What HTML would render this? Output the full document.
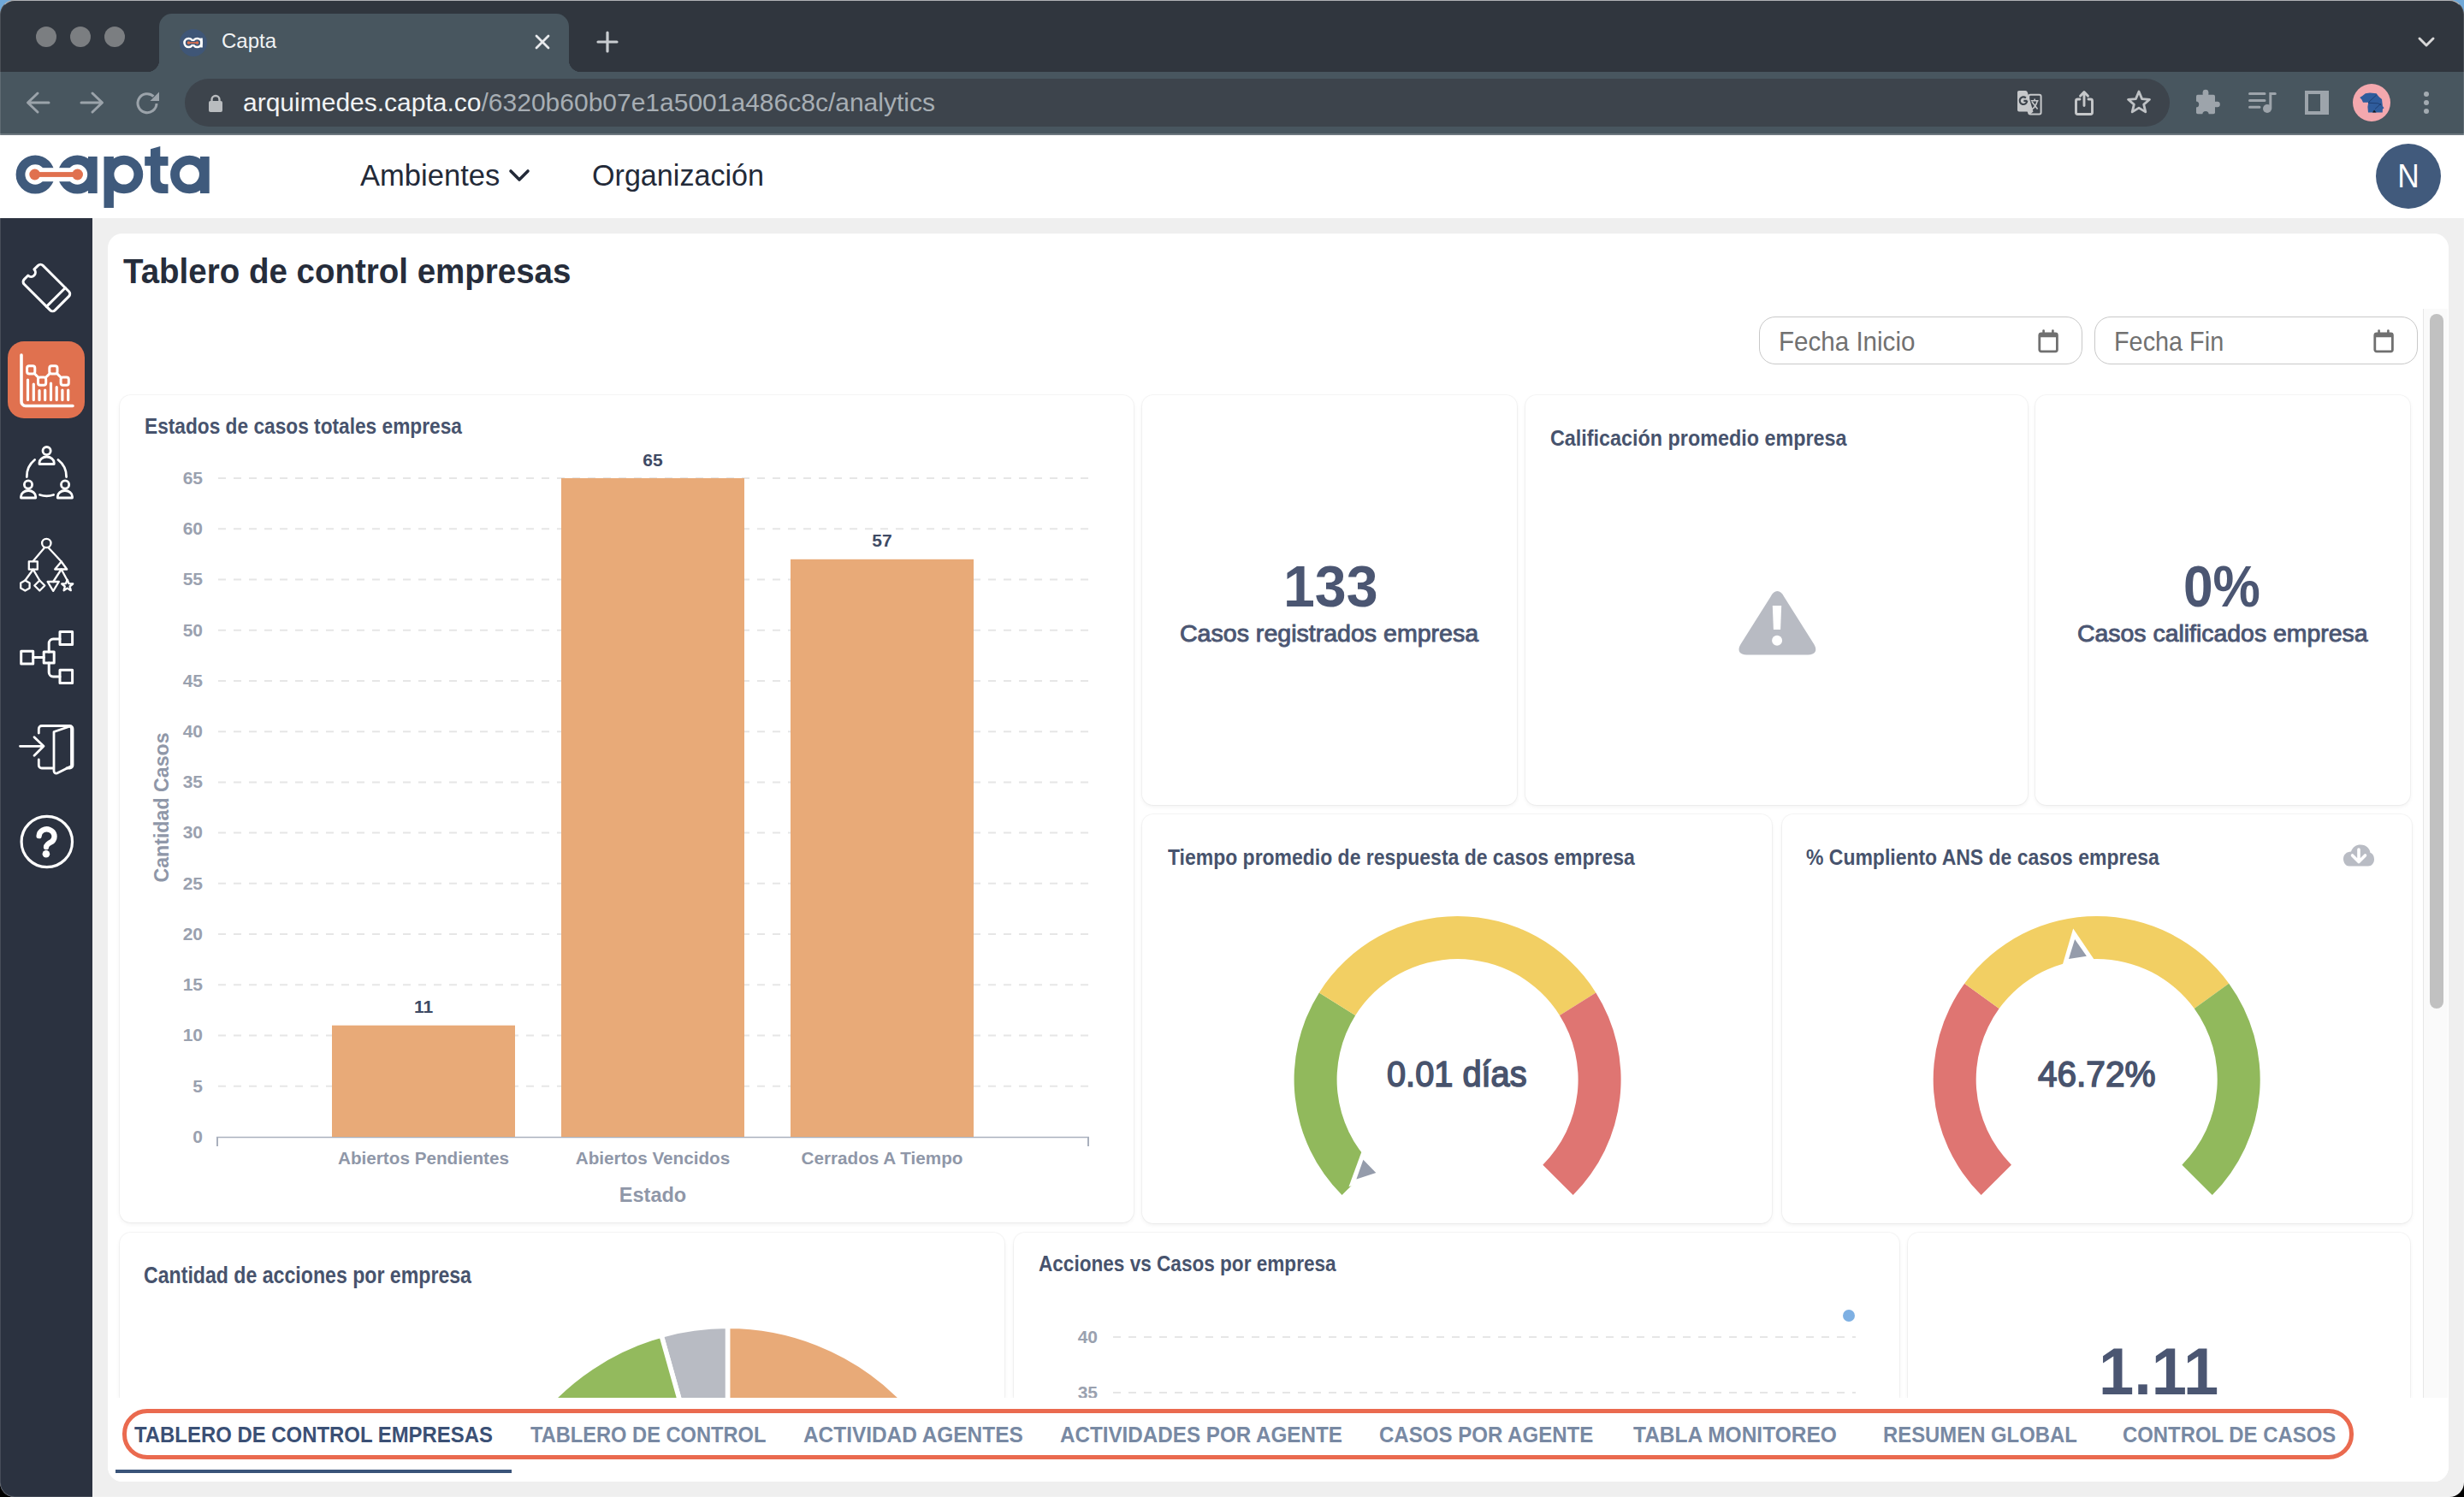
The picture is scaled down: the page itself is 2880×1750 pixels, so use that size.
<!DOCTYPE html>
<html><head><meta charset="utf-8">
<style>
*{box-sizing:border-box;margin:0;padding:0}
html,body{width:2880px;height:1750px;overflow:hidden;background:#000}
body{position:relative;font-family:"Liberation Sans",sans-serif}
.a{position:absolute}
.t{position:absolute;white-space:nowrap;line-height:1}
svg{position:absolute;overflow:visible}
.card{position:absolute;background:#fff;border-radius:13px;box-shadow:0 0 0 1px rgba(0,0,0,0.035),0 2px 5px rgba(0,0,0,0.06)}
.ctitle{position:absolute;white-space:nowrap;line-height:1;font-weight:700;color:#4a556f;font-size:23.5px;letter-spacing:-0.2px}
.tab{position:absolute;white-space:nowrap;line-height:1;font-weight:700;color:#7a8aa5;font-size:23.5px;top:1668px;letter-spacing:0.3px}
</style></head>
<body>
<!-- window frame -->
<div class="a" style="left:0;top:0;width:2880px;height:1750px;background:linear-gradient(#6fa8d8 50%,#000 50%)"></div>
<div class="a" style="left:0;top:0;width:2880px;height:1750px;background:#efefef;border-radius:17px;overflow:hidden">
  <!-- tab strip -->
  <div class="a" style="left:0;top:0;width:2880px;height:84px;background:#30363e"></div>
  <!-- active tab -->
  <div class="a" style="left:186px;top:16px;width:479px;height:70px;background:#48565f;border-radius:15px 15px 0 0"></div>
  <div class="a" style="left:172px;top:70px;width:14px;height:14px;background:radial-gradient(circle at 0 0,#30363e 14px,#48565f 14.5px)"></div>
  <div class="a" style="left:665px;top:70px;width:14px;height:14px;background:radial-gradient(circle at 100% 0,#30363e 14px,#48565f 14.5px)"></div>
  <!-- traffic lights -->
  <div class="a" style="left:42px;top:31px;width:24px;height:24px;border-radius:50%;background:#7b7e81"></div>
  <div class="a" style="left:82px;top:31px;width:24px;height:24px;border-radius:50%;background:#7b7e81"></div>
  <div class="a" style="left:122px;top:31px;width:24px;height:24px;border-radius:50%;background:#7b7e81"></div>
  <!-- favicon -->
  <div class="a" style="left:210px;top:34px;width:32px;height:32px;border-radius:50%;background:#3f5677"></div>
  <svg style="left:210px;top:34px" width="32" height="32" viewBox="0 0 32 32">
    <circle cx="10.5" cy="16" r="5" fill="none" stroke="#fff" stroke-width="2.6"/>
    <circle cx="20.5" cy="16" r="5" fill="none" stroke="#fff" stroke-width="2.6"/>
    <rect x="24.2" y="10.5" width="2.6" height="11" fill="#fff"/>
    <rect x="13" y="14" width="6" height="4" fill="#3f5677"/>
    <circle cx="10.5" cy="16" r="1.8" fill="#e0714f"/><circle cx="20.5" cy="16" r="1.8" fill="#e0714f"/>
    <rect x="10.5" y="15.2" width="10" height="1.6" fill="#e0714f"/>
  </svg>
  <div class="t" style="left:259px;top:36px;font-size:24px;color:#f1f3f4">Capta</div>
  <svg style="left:624px;top:39px" width="20" height="20" viewBox="0 0 20 20"><path d="M3 3L17 17M17 3L3 17" stroke="#e8eaed" stroke-width="2.8" stroke-linecap="round"/></svg>
  <svg style="left:697px;top:36px" width="26" height="26" viewBox="0 0 26 26"><path d="M13 2V24M2 13H24" stroke="#c9cdd1" stroke-width="3.2" stroke-linecap="round"/></svg>
  <svg style="left:2825px;top:42px" width="22" height="16" viewBox="0 0 22 16"><path d="M3 3L11 11L19 3" fill="none" stroke="#d8d8d8" stroke-width="3" stroke-linecap="round" stroke-linejoin="round"/></svg>
  <!-- toolbar -->
  <div class="a" style="left:0;top:84px;width:2880px;height:72px;background:#48565f"></div>
  <div class="a" style="left:0;top:156px;width:2880px;height:2px;background:#6c777e"></div>
  <svg style="left:28px;top:104px" width="32" height="32" viewBox="0 0 32 32"><path d="M29 16H5M16 5L4.5 16L16 27" fill="none" stroke="#9ba3aa" stroke-width="3" stroke-linecap="round" stroke-linejoin="round"/></svg>
  <svg style="left:92px;top:104px" width="32" height="32" viewBox="0 0 32 32"><path d="M3 16H27M16 5L27.5 16L16 27" fill="none" stroke="#9ba3aa" stroke-width="3" stroke-linecap="round" stroke-linejoin="round"/></svg>
  <svg style="left:156px;top:104px" width="34" height="34" viewBox="0 0 34 34"><path d="M27 17A11 11 0 1 1 23.5 8.6" fill="none" stroke="#9ba3aa" stroke-width="3"/><path d="M30 3.5V14H19.5Z" fill="#9ba3aa"/></svg>
  <!-- url pill -->
  <div class="a" style="left:216px;top:92px;width:2320px;height:56px;background:#3d444c;border-radius:28px"></div>
  <svg style="left:243px;top:108px" width="18" height="24" viewBox="0 0 18 24"><path d="M4.5 10V8.5A4.5 4.5 0 0 1 13.5 8.5V10" fill="none" stroke="#b9bcbf" stroke-width="2.4"/><rect x="1" y="10" width="16" height="13" rx="2" fill="#b9bcbf"/></svg>
  <div class="t" style="left:284px;top:105px;font-size:30px;color:#f1f3f4">arquimedes.capta.co<span style="color:#a7aeb4">/6320b60b07e1a5001a486c8c/analytics</span></div>
  <!-- right toolbar icons -->
  <svg style="left:2345px;top:95px" width="50" height="50" viewBox="2345 95 50 50">
    <path d="M2360 106H2367.3C2369 106 2369.6 107 2370 108.5L2376.5 130.5L2372 134.2L2369.5 130.5H2360C2358.6 130.5 2358 129.6 2358 128.3V108.2C2358 106.8 2358.7 106 2360 106Z" fill="#c6c8ca"/>
    <rect x="2371.2" y="110.8" width="14.4" height="22.6" rx="2" fill="none" stroke="#c6c8ca" stroke-width="2"/>
    <path d="M2369.3 117.8A4.3 4.3 0 1 1 2367.9 114.5M2365.4 117.8H2369.3" fill="none" stroke="#3d444c" stroke-width="2.2"/>
    <path d="M2373.8 117.7H2382.6M2378.2 115.5V117.7M2375 119L2381.6 127.6M2381.2 118.2C2380 123 2377.5 126.5 2374 128.3" fill="none" stroke="#c6c8ca" stroke-width="1.6"/>
  </svg>
  <svg style="left:2415px;top:95px" width="40" height="50" viewBox="2415 95 40 50"><path d="M2431 116H2428.5A2 2 0 0 0 2426.5 118V131.5A2 2 0 0 0 2428.5 133.5H2443.5A2 2 0 0 0 2445.5 131.5V118A2 2 0 0 0 2443.5 116H2441M2436 123.5V107.8M2431.5 112.3L2436 107.6L2440.5 112.3" fill="none" stroke="#c6c8ca" stroke-width="2.9" stroke-linecap="round" stroke-linejoin="round"/></svg>
  <svg style="left:2483px;top:103px" width="34" height="34" viewBox="0 0 34 34"><path d="M17 4L20.6 12.6L29.5 13.3L22.7 19.1L24.8 27.9L17 23.1L9.2 27.9L11.3 19.1L4.5 13.3L13.4 12.6Z" fill="none" stroke="#bfc2c5" stroke-width="2.8" stroke-linejoin="round"/></svg>
  <svg style="left:2550px;top:95px" width="60" height="50" viewBox="2550 95 60 50"><rect x="2567" y="110.8" width="22" height="22.4" rx="1.8" fill="#9da4ab"/><circle cx="2578" cy="108" r="3.3" fill="#9da4ab"/><rect x="2574.7" y="108" width="6.6" height="4" fill="#9da4ab"/><circle cx="2591.6" cy="122" r="3.2" fill="#9da4ab"/><rect x="2587" y="118.8" width="4.6" height="6.4" fill="#9da4ab"/><circle cx="2566.6" cy="122" r="3.6" fill="#48565f"/><circle cx="2578" cy="133.6" r="3.6" fill="#48565f"/></svg>
  <svg style="left:2620px;top:100px" width="50" height="40" viewBox="2620 100 50 40"><path d="M2629.5 109.6H2647M2629.5 117.4H2647M2629.5 125.3H2641" stroke="#9da4ab" stroke-width="3" stroke-linecap="round"/><path d="M2653.8 127V109.5H2659.3" fill="none" stroke="#9da4ab" stroke-width="3" stroke-linecap="round"/><circle cx="2650" cy="127" r="5" fill="#9da4ab"/></svg>
  <svg style="left:2690px;top:100px" width="40" height="40" viewBox="2690 100 40 40"><path d="M2694 106H2722V134H2694ZM2698 110V130H2712V110Z" fill="#9da4ab" fill-rule="evenodd"/></svg>
  <div class="a" style="left:2750px;top:98px;width:44px;height:44px;border-radius:50%;background:#f4a8ae"></div>
  <svg style="left:2745px;top:95px" width="55" height="50" viewBox="2745 95 55 50"><path d="M2758.2 114L2761 112.3L2764.8 109.2L2770 108.6L2777.6 109.3L2780.5 113L2784 116L2784.9 124L2786.6 126.3L2784.9 127.6L2784.7 131.4L2768 131.4L2767.4 125L2768.2 119.8L2762 119.8L2760.5 116.5Z" fill="#2f5c9c"/><path d="M2768.2 119.8L2777.7 111M2768.2 120.3L2779.5 120.8L2783.5 123M2776 127.5L2783 121" fill="none" stroke="#1e3f72" stroke-width="1"/><path d="M2773 131.4L2775 128.5L2777.5 131.4Z" fill="#1a1a22"/></svg>
  <div class="a" style="left:2833px;top:107px;width:6px;height:6px;border-radius:50%;background:#a3abb1"></div>
  <div class="a" style="left:2833px;top:117px;width:6px;height:6px;border-radius:50%;background:#a3abb1"></div>
  <div class="a" style="left:2833px;top:127px;width:6px;height:6px;border-radius:50%;background:#a3abb1"></div>

  <!-- app header -->
  <div class="a" style="left:0;top:158px;width:2880px;height:97px;background:#fff"></div>
  <svg style="left:0;top:158px" width="260" height="97" viewBox="0 158 260 97">
    <g fill="none" stroke="#3f5a7c" stroke-width="10.8">
      <circle cx="41.2" cy="204" r="17.2"/>
      <circle cx="90.4" cy="204" r="17.2"/>
      <circle cx="144.9" cy="204" r="16.9"/>
      <circle cx="221.4" cy="204" r="16.9"/>
    </g>
    <rect x="48" y="196.2" width="16" height="16" fill="#fff"/>
    <rect x="67" y="196.2" width="16" height="16" fill="#fff"/>
    <rect x="103" y="183" width="10.7" height="43" fill="#3f5a7c"/>
    <rect x="121.5" y="183" width="11.4" height="60" fill="#3f5a7c"/>
    <rect x="234" y="183" width="10.7" height="43" fill="#3f5a7c"/>
    <path d="M176 174.3L187.3 171V183H196.5V193.7H187.3V209C187.3 213 189 215.2 193 215.2H196.5V226H189C180 226 176 221 176 212V193.7H169.2V183H176Z" fill="#3f5a7c"/>
    <circle cx="40.7" cy="204" r="6.4" fill="#e0714f"/>
    <circle cx="90.6" cy="204" r="6.4" fill="#e0714f"/>
    <rect x="40.7" y="201.1" width="49.9" height="5.8" fill="#e0714f"/>
  </svg>
  
  <svg style="left:593px;top:196px" width="28" height="20" viewBox="0 0 28 20"><path d="M4 4L14 14L24 4" fill="none" stroke="#232a38" stroke-width="3.6" stroke-linecap="round" stroke-linejoin="round"/></svg>
  
  <div class="a" style="left:2777px;top:168px;width:76px;height:76px;border-radius:50%;background:#415a7c"></div>
  <div class="t" style="left:2777px;top:187px;width:76px;text-align:center;font-size:38px;color:#fff;transform:scaleX(0.93)">N</div>

  <!-- sidebar -->
  <div class="a" style="left:0;top:255px;width:108px;height:1495px;background:#2b3240"></div>
  <div class="a" style="left:9px;top:399px;width:90px;height:90px;border-radius:19px;background:#e0714f"></div>
  <svg style="left:0;top:255px" width="108" height="800" viewBox="0 255 108 800">
    <g fill="none" stroke="#fff" stroke-width="3" stroke-linecap="round" stroke-linejoin="round">
      <!-- ticket -->
      <g transform="translate(54.4 336.5) rotate(-45)">
        <path d="M-11.5 -25.5H-5A5 5 0 0 0 5 -25.5H11.5A4 4 0 0 1 15.5 -21.5V21.5A4 4 0 0 1 11.5 25.5H-11.5A4 4 0 0 1 -15.5 21.5V-21.5A4 4 0 0 1 -11.5 -25.5Z"/>
        <path d="M-15.5 15.5H15.5"/>
      </g>
      <!-- chart -->
      <path d="M25 415V469A5 5 0 0 0 30 474.5H85" stroke-width="3.6"/>
      <path d="M32.5 467.5V444M39.3 467.5V449M46 467.5V456.5M52.7 467.5V456M59.5 467.5V448M66.2 467.5V452.5M72.9 467.5V456M79.7 467.5V456" stroke-width="3.2"/>
      <path d="M36.2 432.4L49.1 445.7L62.4 432.4L75.7 445.7" stroke-width="3"/>
      <rect x="31.6" y="427.8" width="9.2" height="9.2" rx="2.5" fill="#e0714f"/>
      <rect x="44.5" y="441.1" width="9.2" height="9.2" rx="2.5" fill="#e0714f"/>
      <rect x="57.8" y="427.8" width="9.2" height="9.2" rx="2.5" fill="#e0714f"/>
      <rect x="71.1" y="441.1" width="9.2" height="9.2" rx="2.5" fill="#e0714f"/>
      <!-- team -->
      <circle cx="54.6" cy="527.1" r="4.6" stroke-width="2.8"/>
      <path d="M46 542.5V541A8.6 7 0 0 1 63.2 541V542.5Z" stroke-width="2.8"/>
      <circle cx="33" cy="566.5" r="4.6" stroke-width="2.8"/>
      <path d="M24.5 582V580.5A8.6 7 0 0 1 41.7 580.5V582Z" stroke-width="2.8"/>
      <circle cx="76.1" cy="566.5" r="4.6" stroke-width="2.8"/>
      <path d="M67.3 582V580.5A8.6 7 0 0 1 84.5 580.5V582Z" stroke-width="2.8"/>
      <path d="M40.6 537.5A25 25 0 0 0 31.3 557.5M67.9 537.5A25 25 0 0 1 77.6 557.5M46.5 578.5A25 25 0 0 0 62.6 578.5" stroke-width="2.8"/>
      <!-- tree -->
      <g stroke-width="2.3">
      <circle cx="54.3" cy="635" r="5.2"/>
      <path d="M52 640.2L38.7 656M56.6 640.2L71.7 656.5"/>
      <rect x="33.8" y="656.3" width="10" height="9.4"/>
      <path d="M71.7 656.5L78.2 665.5H64.2Z"/>
      <path d="M38.7 665.7L29.4 678.5M38.7 665.7L46.3 678.5M71.7 665.5L62.2 680M71.7 665.5L78.7 678.5"/>
      <path d="M29.4 678.5L34.6 681.5V687.5L29.4 690.5L24.2 687.5V681.5Z"/>
      <path d="M46.3 678.5L52.3 684.5L46.3 690.5L40.3 684.5Z"/>
      <path d="M55.6 680H68.8L62.2 690.8Z"/>
      <path d="M78.7 677.8L80.5 682.2L85.2 682.5L81.6 685.5L82.8 690.2L78.7 687.6L74.6 690.2L75.8 685.5L72.2 682.5L76.9 682.2Z"/>
      </g>
      <!-- flow -->
      <rect x="24.7" y="761.3" width="14" height="14.6"/>
      <rect x="51.2" y="762" width="12" height="13"/>
      <rect x="70" y="738.5" width="14.6" height="15"/>
      <rect x="70" y="783.2" width="14.6" height="15.2"/>
      <path d="M38.7 768.5H51.2M57.2 762V752A5 5 0 0 1 62.2 747H70M57.2 775V786A5 5 0 0 0 62.2 791H70"/>
      <!-- door -->
      <path d="M23.5 872.3H51M40 861.8L51 872.3L40 883.3" stroke-width="2.8"/>
      <path d="M45.3 857V852A3.5 3.5 0 0 1 48.8 848.5H81.5A3.5 3.5 0 0 1 85 852V894.5A3.5 3.5 0 0 1 81.5 898H78M45.3 888V894.5A3.5 3.5 0 0 0 48.8 898H62.5" stroke-width="2.8"/>
      <path d="M63 855.5L80.5 849.5A2.5 2.5 0 0 1 83.5 852V895.5L66.5 904A2.8 2.8 0 0 1 63 901.5Z" stroke-width="2.8"/>
      <!-- help -->
      <circle cx="54.8" cy="984" r="29.7" stroke-width="3.2"/>
    </g>
    <path d="M45.6 977.2A9 8.4 0 1 1 61 983.6Q54 987.2 54 990.2" fill="none" stroke="#fff" stroke-width="6.3" stroke-linecap="round" stroke-linejoin="round"/><circle cx="53.9" cy="998.3" r="4.3" fill="#fff"/>
  </svg>

  <!-- main panel -->
  <div class="a" style="left:126px;top:273px;width:2736px;height:1459px;background:#fff;border-radius:17px"></div>
  
  <div class="a" style="left:2056px;top:370px;width:378px;height:56px;border:1.6px solid #c8c8c8;border-radius:19px;background:#fff"></div>
<svg style="left:2381px;top:383px" width="26" height="32" viewBox="0 0 26 32"><rect x="2.8" y="6.8" width="20.6" height="21" rx="2" fill="none" stroke="#707070" stroke-width="2.8"/><rect x="2" y="6" width="22" height="5.2" rx="1.5" fill="#707070"/><rect x="6.3" y="2.3" width="2.6" height="5" rx="1.2" fill="#707070"/><rect x="17.1" y="2.3" width="2.6" height="5" rx="1.2" fill="#707070"/></svg>
<div class="a" style="left:2448px;top:370px;width:378px;height:56px;border:1.6px solid #c8c8c8;border-radius:19px;background:#fff"></div>
<svg style="left:2773px;top:383px" width="26" height="32" viewBox="0 0 26 32"><rect x="2.8" y="6.8" width="20.6" height="21" rx="2" fill="none" stroke="#707070" stroke-width="2.8"/><rect x="2" y="6" width="22" height="5.2" rx="1.5" fill="#707070"/><rect x="6.3" y="2.3" width="2.6" height="5" rx="1.2" fill="#707070"/><rect x="17.1" y="2.3" width="2.6" height="5" rx="1.2" fill="#707070"/></svg>
<div class="a" style="left:2832px;top:361px;width:29px;height:1273px;background:#fafafa;border-left:1.5px solid #e6e6e6"></div>
<div class="a" style="left:2840px;top:367px;width:16px;height:812px;border-radius:8px;background:#c1c1c1"></div>
<div class="card" style="left:140px;top:462px;width:1185px;height:967px"></div>
<div class="card" style="left:1335px;top:462px;width:438px;height:479px"></div>
<div class="card" style="left:1783px;top:462px;width:587px;height:479px"></div>
<div class="card" style="left:2379px;top:462px;width:438px;height:479px"></div>
<div class="card" style="left:1335px;top:952px;width:736px;height:478px"></div>
<div class="card" style="left:2083px;top:952px;width:736px;height:478px"></div>
<div class="card" style="left:140px;top:1441px;width:1034px;height:193px;border-radius:13px 13px 0 0"></div>
<div class="card" style="left:1185px;top:1441px;width:1035px;height:193px;border-radius:13px 13px 0 0"></div>
<div class="card" style="left:2230px;top:1441px;width:587px;height:193px;border-radius:13px 13px 0 0"></div>
<svg style="left:0;top:0" width="2880" height="1750" viewBox="0 0 2880 1750"><defs><clipPath id="cl"><rect x="0" y="0" width="2880" height="1634"/></clipPath></defs><g clip-path="url(#cl)"><line x1="255" y1="1269.8" x2="1273" y2="1269.8" stroke="#e6e6e6" stroke-width="2" stroke-dasharray="9 9"/><line x1="255" y1="1210.5" x2="1273" y2="1210.5" stroke="#e6e6e6" stroke-width="2" stroke-dasharray="9 9"/><line x1="255" y1="1151.3" x2="1273" y2="1151.3" stroke="#e6e6e6" stroke-width="2" stroke-dasharray="9 9"/><line x1="255" y1="1092.1" x2="1273" y2="1092.1" stroke="#e6e6e6" stroke-width="2" stroke-dasharray="9 9"/><line x1="255" y1="1032.8" x2="1273" y2="1032.8" stroke="#e6e6e6" stroke-width="2" stroke-dasharray="9 9"/><line x1="255" y1="973.6" x2="1273" y2="973.6" stroke="#e6e6e6" stroke-width="2" stroke-dasharray="9 9"/><line x1="255" y1="914.4" x2="1273" y2="914.4" stroke="#e6e6e6" stroke-width="2" stroke-dasharray="9 9"/><line x1="255" y1="855.2" x2="1273" y2="855.2" stroke="#e6e6e6" stroke-width="2" stroke-dasharray="9 9"/><line x1="255" y1="795.9" x2="1273" y2="795.9" stroke="#e6e6e6" stroke-width="2" stroke-dasharray="9 9"/><line x1="255" y1="736.7" x2="1273" y2="736.7" stroke="#e6e6e6" stroke-width="2" stroke-dasharray="9 9"/><line x1="255" y1="677.5" x2="1273" y2="677.5" stroke="#e6e6e6" stroke-width="2" stroke-dasharray="9 9"/><line x1="255" y1="618.2" x2="1273" y2="618.2" stroke="#e6e6e6" stroke-width="2" stroke-dasharray="9 9"/><line x1="255" y1="559.0" x2="1273" y2="559.0" stroke="#e6e6e6" stroke-width="2" stroke-dasharray="9 9"/><text x="237" y="1335.8" text-anchor="end" font-family="Liberation Sans" font-weight="700" font-size="21" fill="#9aa1af">0</text><text x="237" y="1276.6" text-anchor="end" font-family="Liberation Sans" font-weight="700" font-size="21" fill="#9aa1af">5</text><text x="237" y="1217.3" text-anchor="end" font-family="Liberation Sans" font-weight="700" font-size="21" fill="#9aa1af">10</text><text x="237" y="1158.1" text-anchor="end" font-family="Liberation Sans" font-weight="700" font-size="21" fill="#9aa1af">15</text><text x="237" y="1098.9" text-anchor="end" font-family="Liberation Sans" font-weight="700" font-size="21" fill="#9aa1af">20</text><text x="237" y="1039.6" text-anchor="end" font-family="Liberation Sans" font-weight="700" font-size="21" fill="#9aa1af">25</text><text x="237" y="980.4" text-anchor="end" font-family="Liberation Sans" font-weight="700" font-size="21" fill="#9aa1af">30</text><text x="237" y="921.2" text-anchor="end" font-family="Liberation Sans" font-weight="700" font-size="21" fill="#9aa1af">35</text><text x="237" y="862.0" text-anchor="end" font-family="Liberation Sans" font-weight="700" font-size="21" fill="#9aa1af">40</text><text x="237" y="802.7" text-anchor="end" font-family="Liberation Sans" font-weight="700" font-size="21" fill="#9aa1af">45</text><text x="237" y="743.5" text-anchor="end" font-family="Liberation Sans" font-weight="700" font-size="21" fill="#9aa1af">50</text><text x="237" y="684.3" text-anchor="end" font-family="Liberation Sans" font-weight="700" font-size="21" fill="#9aa1af">55</text><text x="237" y="625.0" text-anchor="end" font-family="Liberation Sans" font-weight="700" font-size="21" fill="#9aa1af">60</text><text x="237" y="565.8" text-anchor="end" font-family="Liberation Sans" font-weight="700" font-size="21" fill="#9aa1af">65</text><line x1="253" y1="1329.5" x2="1273" y2="1329.5" stroke="#aab1be" stroke-width="1.6"/><line x1="254" y1="1329" x2="254" y2="1340" stroke="#a9b0bd" stroke-width="2"/><line x1="1272" y1="1329" x2="1272" y2="1340" stroke="#a9b0bd" stroke-width="2"/><rect x="388" y="1198.7" width="214" height="130.3" fill="#e8aa78"/><text x="495" y="1184.2" text-anchor="middle" font-family="Liberation Sans" font-weight="700" font-size="21" fill="#3e4a64">11</text><text x="495" y="1361" text-anchor="middle" font-family="Liberation Sans" font-weight="700" font-size="20.7" fill="#8f97a8">Abiertos Pendientes</text><rect x="656" y="559.0" width="214" height="770.0" fill="#e8aa78"/><text x="763" y="544.5" text-anchor="middle" font-family="Liberation Sans" font-weight="700" font-size="21" fill="#3e4a64">65</text><text x="763" y="1361" text-anchor="middle" font-family="Liberation Sans" font-weight="700" font-size="20.7" fill="#8f97a8">Abiertos Vencidos</text><rect x="924" y="653.8" width="214" height="675.2" fill="#e8aa78"/><text x="1031" y="639.3" text-anchor="middle" font-family="Liberation Sans" font-weight="700" font-size="21" fill="#3e4a64">57</text><text x="1031" y="1361" text-anchor="middle" font-family="Liberation Sans" font-weight="700" font-size="20.7" fill="#8f97a8">Cerrados A Tiempo</text><text x="763" y="1405" text-anchor="middle" font-family="Liberation Sans" font-weight="700" font-size="23.5" fill="#8f97a8">Estado</text><text transform="translate(197 944) rotate(-90)" text-anchor="middle" font-family="Liberation Sans" font-weight="700" font-size="23.2" fill="#8f97a8">Cantidad Casos</text><path d="M2069.6 697.5C2073.3 688.8 2081.5 688.8 2085.2 697.5L2120.2 753C2124.8 760.5 2121.5 765.4 2113.2 765.4H2041.6C2033.3 765.4 2030 760.5 2034.6 753Z" fill="#b8bbc3"/><path d="M2071.8 708H2082.2L2081.1 736H2072.9Z" fill="#fff"/><circle cx="2077.1" cy="748.8" r="6" fill="#fff"/><path d="M1568.54 1397.06A191 191 0 0 1 1541.87 1160.39L1584.21 1186.99A141 141 0 0 0 1603.90 1361.70Z" fill="#91b95c"/><path d="M1541.87 1160.39A191 191 0 0 1 1865.33 1160.39L1822.99 1186.99A141 141 0 0 0 1584.21 1186.99Z" fill="#f2cf63"/><path d="M1865.33 1160.39A191 191 0 0 1 1838.66 1397.06L1803.30 1361.70A141 141 0 0 0 1822.99 1186.99Z" fill="#df7572"/><path d="M1576.5 1387.3L1618.0 1372.8L1591.6 1346.1Z" fill="#fff"/><path d="M1585.4 1378.6L1608.3 1370.9L1593.4 1355.8Z" fill="#959cab"/><path d="M2746 1012.5C2740 1012.5 2739 1006 2739 1004C2739 999 2743 995.5 2748 995.5C2750 990 2754 987.5 2759 987.5C2766 987.5 2770 992.5 2770.5 997C2773.5 997.5 2775 1001 2775 1004.5C2775 1009 2772 1012.5 2768 1012.5Z" fill="#b9bcc4"/><path d="M2757 993V1006M2749.5 1000L2757 1007.5L2764.5 1000" fill="none" stroke="#fff" stroke-width="3.6" stroke-linecap="round" stroke-linejoin="round"/><path d="M2315.64 1397.06A191 191 0 0 1 2296.18 1149.73L2336.63 1179.12A141 141 0 0 0 2351.00 1361.70Z" fill="#df7572"/><path d="M2296.18 1149.73A191 191 0 0 1 2605.22 1149.73L2564.77 1179.12A141 141 0 0 0 2336.63 1179.12Z" fill="#f2cf63"/><path d="M2605.22 1149.73A191 191 0 0 1 2585.76 1397.06L2550.40 1361.70A141 141 0 0 0 2564.77 1179.12Z" fill="#91b95c"/><path d="M2423.2 1085.6L2410.8 1127.8L2447.9 1122.0Z" fill="#fff"/><path d="M2425.1 1098.0L2418.0 1121.0L2438.9 1117.8Z" fill="#959cab"/><path d="M850.5 1836.6L850.50 1550.30A286.3 286.3 0 0 1 1136.80 1836.60Z" fill="#e8aa78" stroke="#fff" stroke-width="5.5" stroke-linejoin="round"/><path d="M850.5 1836.6L773.03 1560.98A286.3 286.3 0 0 1 850.50 1550.30Z" fill="#b8bbc3" stroke="#fff" stroke-width="5.5" stroke-linejoin="round"/><path d="M850.5 1836.6L564.20 1836.60A286.3 286.3 0 0 1 773.03 1560.98Z" fill="#93ba5d" stroke="#fff" stroke-width="5.5" stroke-linejoin="round"/><line x1="1301" y1="1563" x2="2169" y2="1563" stroke="#e6e6e6" stroke-width="2" stroke-dasharray="9 9"/><text x="1283" y="1569.8" text-anchor="end" font-family="Liberation Sans" font-weight="700" font-size="21" fill="#9aa1af">40</text><line x1="1301" y1="1628" x2="2169" y2="1628" stroke="#e6e6e6" stroke-width="2" stroke-dasharray="9 9"/><text x="1283" y="1634.8" text-anchor="end" font-family="Liberation Sans" font-weight="700" font-size="21" fill="#9aa1af">35</text><circle cx="2161" cy="1538" r="7" fill="#7eb0e3"/></g></svg>
<div class="a" style="left:126px;top:1634px;width:2736px;height:98px;background:#fff;border-radius:0 0 17px 17px"></div>
<div class="a" style="left:142.5px;top:1647px;width:2608.5px;height:59px;border:5.5px solid #ea6a4f;border-radius:29px"></div>

<div class="a" style="left:135px;top:1718px;width:463px;height:3.5px;background:#3a5479"></div>
<div class="t" style="left:2078.84px;top:382.50px;font-size:32.17px;font-weight:400;color:#717171;transform:scaleX(0.9195);transform-origin:0 0">Fecha Inicio</div>
<div class="t" style="left:2471.01px;top:382.50px;font-size:32.17px;font-weight:400;color:#717171;transform:scaleX(0.8964);transform-origin:0 0">Fecha Fin</div>
<div class="t" style="left:169.27px;top:484.80px;font-size:26.23px;font-weight:700;color:#47536d;transform:scaleX(0.8658);transform-origin:0 0">Estados de casos totales empresa</div>
<div class="t" style="left:1499.80px;top:652.00px;font-size:67.97px;font-weight:700;color:#4b5672;transform:scaleX(0.9748);transform-origin:0 0">133</div>
<div class="t" style="left:1378.96px;top:727.10px;font-size:27.54px;font-weight:400;color:#4b5672;transform:scaleX(1.0372);transform-origin:0 0;-webkit-text-stroke:0.9px #4b5672">Casos registrados empresa</div>
<div class="t" style="left:1811.91px;top:498.80px;font-size:26.38px;font-weight:700;color:#47536d;transform:scaleX(0.8854);transform-origin:0 0">Calificación promedio empresa</div>
<div class="t" style="left:2551.96px;top:651.00px;font-size:68.12px;font-weight:700;color:#4b5672;transform:scaleX(0.9138);transform-origin:0 0">0%</div>
<div class="t" style="left:2427.97px;top:727.10px;font-size:27.54px;font-weight:400;color:#4b5672;transform:scaleX(1.0320);transform-origin:0 0;-webkit-text-stroke:0.9px #4b5672">Casos calificados empresa</div>
<div class="t" style="left:1365.00px;top:988.80px;font-size:26.09px;font-weight:700;color:#47536d;transform:scaleX(0.8806);transform-origin:0 0">Tiempo promedio de respuesta de casos empresa</div>
<div class="t" style="left:1621.09px;top:1235.30px;font-size:41.59px;font-weight:400;color:#48536d;transform:scaleX(0.9560);transform-origin:0 0;-webkit-text-stroke:1.6px #48536d">0.01 días</div>
<div class="t" style="left:2110.92px;top:988.80px;font-size:26.09px;font-weight:700;color:#47536d;transform:scaleX(0.8808);transform-origin:0 0">% Cumpliento ANS de casos empresa</div>
<div class="t" style="left:2382.03px;top:1235.30px;font-size:41.59px;font-weight:400;color:#48536d;transform:scaleX(0.9748);transform-origin:0 0;-webkit-text-stroke:1.6px #48536d">46.72%</div>
<div class="t" style="left:168.15px;top:1477.40px;font-size:27.25px;font-weight:700;color:#47536d;transform:scaleX(0.8486);transform-origin:0 0">Cantidad de acciones por empresa</div>
<div class="t" style="left:1214.11px;top:1465.00px;font-size:25.36px;font-weight:700;color:#47536d;transform:scaleX(0.8903);transform-origin:0 0">Acciones vs Casos por empresa</div>
<div class="t" style="left:2452.89px;top:1565.20px;font-size:77.1px;font-weight:700;color:#4b5672;transform:scaleX(0.9612);transform-origin:0 0">1.11</div>
<div class="t" style="left:143.90px;top:297.00px;font-size:40.43px;font-weight:700;color:#262d3b;transform:scaleX(0.9524);transform-origin:0 0">Tablero de control empresas</div>
<div class="t" style="left:420.50px;top:188.00px;font-size:35.51px;font-weight:400;color:#232a38;transform:scaleX(0.9731);transform-origin:0 0">Ambientes</div>
<div class="t" style="left:692.08px;top:188.00px;font-size:35.51px;font-weight:400;color:#232a38;transform:scaleX(0.9610);transform-origin:0 0">Organización</div>
<div class="t" style="left:157.30px;top:1663.90px;font-size:26.23px;font-weight:700;color:#3b5075;transform:scaleX(0.9120);transform-origin:0 0;z-index:2">TABLERO DE CONTROL EMPRESAS</div>
<div class="t" style="left:620.00px;top:1663.90px;font-size:26.23px;font-weight:700;color:#7889a3;transform:scaleX(0.9016);transform-origin:0 0;z-index:2">TABLERO DE CONTROL</div>
<div class="t" style="left:939.07px;top:1663.90px;font-size:26.23px;font-weight:700;color:#7889a3;transform:scaleX(0.9307);transform-origin:0 0;z-index:2">ACTIVIDAD AGENTES</div>
<div class="t" style="left:1238.78px;top:1663.90px;font-size:26.23px;font-weight:700;color:#7889a3;transform:scaleX(0.9230);transform-origin:0 0;z-index:2">ACTIVIDADES POR AGENTE</div>
<div class="t" style="left:1612.08px;top:1663.90px;font-size:26.23px;font-weight:700;color:#7889a3;transform:scaleX(0.9170);transform-origin:0 0;z-index:2">CASOS POR AGENTE</div>
<div class="t" style="left:1908.80px;top:1663.90px;font-size:26.23px;font-weight:700;color:#7889a3;transform:scaleX(0.9352);transform-origin:0 0;z-index:2">TABLA MONITOREO</div>
<div class="t" style="left:2201.18px;top:1663.90px;font-size:26.23px;font-weight:700;color:#7889a3;transform:scaleX(0.9106);transform-origin:0 0;z-index:2">RESUMEN GLOBAL</div>
<div class="t" style="left:2480.59px;top:1663.90px;font-size:26.23px;font-weight:700;color:#7889a3;transform:scaleX(0.9114);transform-origin:0 0;z-index:2">CONTROL DE CASOS</div>
</div>
<div class="a" style="left:0;top:0;width:2880px;height:1750px;border-radius:17px;border:1.5px solid rgba(255,255,255,0.13);border-top:1.8px solid rgba(255,255,255,0.62);pointer-events:none"></div>
</body></html>
